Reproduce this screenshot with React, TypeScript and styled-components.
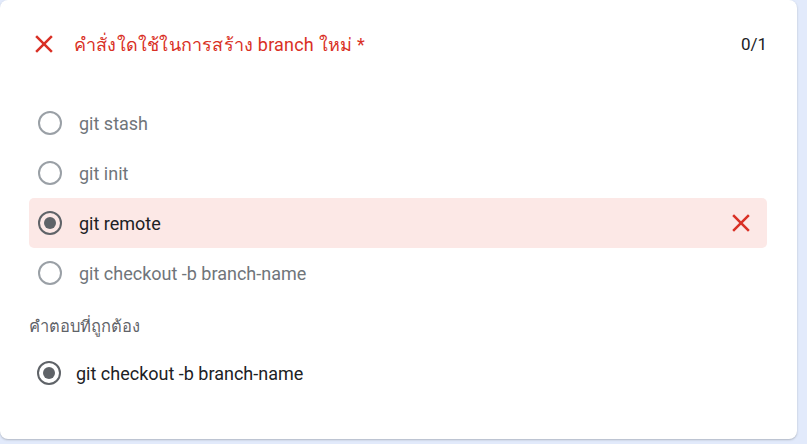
import React from "react";
import styled, { createGlobalStyle } from "styled-components";

const Global = createGlobalStyle`
  html, body { margin: 0; padding: 0; }
  body {
    background: #e2eafb;
    font-family: Roboto, "Noto Sans", "DejaVu Sans", sans-serif;
    width: 807px;
    height: 444px;
    overflow: hidden;
  }
`;

const Card = styled.div`
  box-sizing: border-box;
  width: 797px;
  height: 439px;
  background: #ffffff;
  border-radius: 8px;
  box-shadow: 0 1px 2px rgba(60, 64, 67, 0.3);
  padding: 32px 30px 0 29px;
  display: flex;
  flex-direction: column;
`;

const Header = styled.div`
  display: flex;
  align-items: center;
  height: 24px;
`;

const IconBox = styled.span<{ $size: number }>`
  display: inline-flex;
  width: ${(p) => p.$size}px;
  height: ${(p) => p.$size}px;
  align-items: center;
  justify-content: center;
  color: #d93025;
  flex: none;
`;

const Title = styled.div`
  flex: 1;
  margin-left: 15px;
  font-size: 18px;
  color: #d93025;
  letter-spacing: 0.2px;
`;

const Score = styled.div`
  font-size: 17px;
  color: #202124;
`;

const Options = styled.div`
  display: flex;
  flex-direction: column;
  margin-top: 42px;
`;

const Row = styled.div<{ $wrong?: boolean }>`
  display: flex;
  align-items: center;
  height: 50px;
  padding: 0 11px 0 9px;
  border-radius: 5px;
  background: ${(p) => (p.$wrong ? "#fce8e6" : "transparent")};
`;

const Radio = styled.span<{ $checked?: boolean }>`
  box-sizing: border-box;
  width: 24px;
  height: 24px;
  border-radius: 50%;
  border: 2px solid ${(p) => (p.$checked ? "#5f6368" : "#9aa0a6")};
  display: inline-flex;
  align-items: center;
  justify-content: center;
  flex: none;
  &::after {
    content: "";
    display: ${(p) => (p.$checked ? "block" : "none")};
    width: 12px;
    height: 12px;
    border-radius: 50%;
    background: #5f6368;
  }
`;

const OptionText = styled.span<{ $dark?: boolean; $gap: number }>`
  flex: 1;
  margin-left: ${(p) => p.$gap}px;
  font-size: 18px;
  color: ${(p) => (p.$dark ? "#202124" : "#70757a")};
`;

const AnswerLabel = styled.div`
  margin-top: 19px;
  font-size: 16.5px;
  line-height: 20px;
  color: #5f6368;
`;

const AnswerRow = styled.div`
  display: flex;
  align-items: center;
  height: 50px;
  margin-top: 11px;
  padding-left: 8px;
`;

const CloseIcon = () => (
  <svg width="30" height="30" viewBox="0 0 24 24" fill="currentColor">
    <path d="M19 6.41L17.59 5 12 10.59 6.41 5 5 6.41 10.59 12 5 17.59 6.41 19 12 13.41 17.59 19 19 17.59 13.41 12z" />
  </svg>
);

const options = [
  { label: "git stash", selected: false },
  { label: "git init", selected: false },
  { label: "git remote", selected: true },
  { label: "git checkout -b branch-name", selected: false },
];

export default function App() {
  return (
    <>
      <Global />
      <Card>
        <Header>
          <IconBox $size={30}>
            <CloseIcon />
          </IconBox>
          <Title>คำสั่งใดใช้ในการสร้าง branch ใหม่ *</Title>
          <Score>0/1</Score>
        </Header>
        <Options>
          {options.map((o) => (
            <Row key={o.label} $wrong={o.selected}>
              <Radio $checked={o.selected} />
              <OptionText $gap={17} $dark={o.selected}>
                {o.label}
              </OptionText>
              {o.selected && (
                <IconBox $size={30}>
                  <CloseIcon />
                </IconBox>
              )}
            </Row>
          ))}
        </Options>
        <AnswerLabel>คำตอบที่ถูกต้อง</AnswerLabel>
        <AnswerRow>
          <Radio $checked />
          <OptionText $gap={15} $dark>
            git checkout -b branch-name
          </OptionText>
        </AnswerRow>
      </Card>
    </>
  );
}
